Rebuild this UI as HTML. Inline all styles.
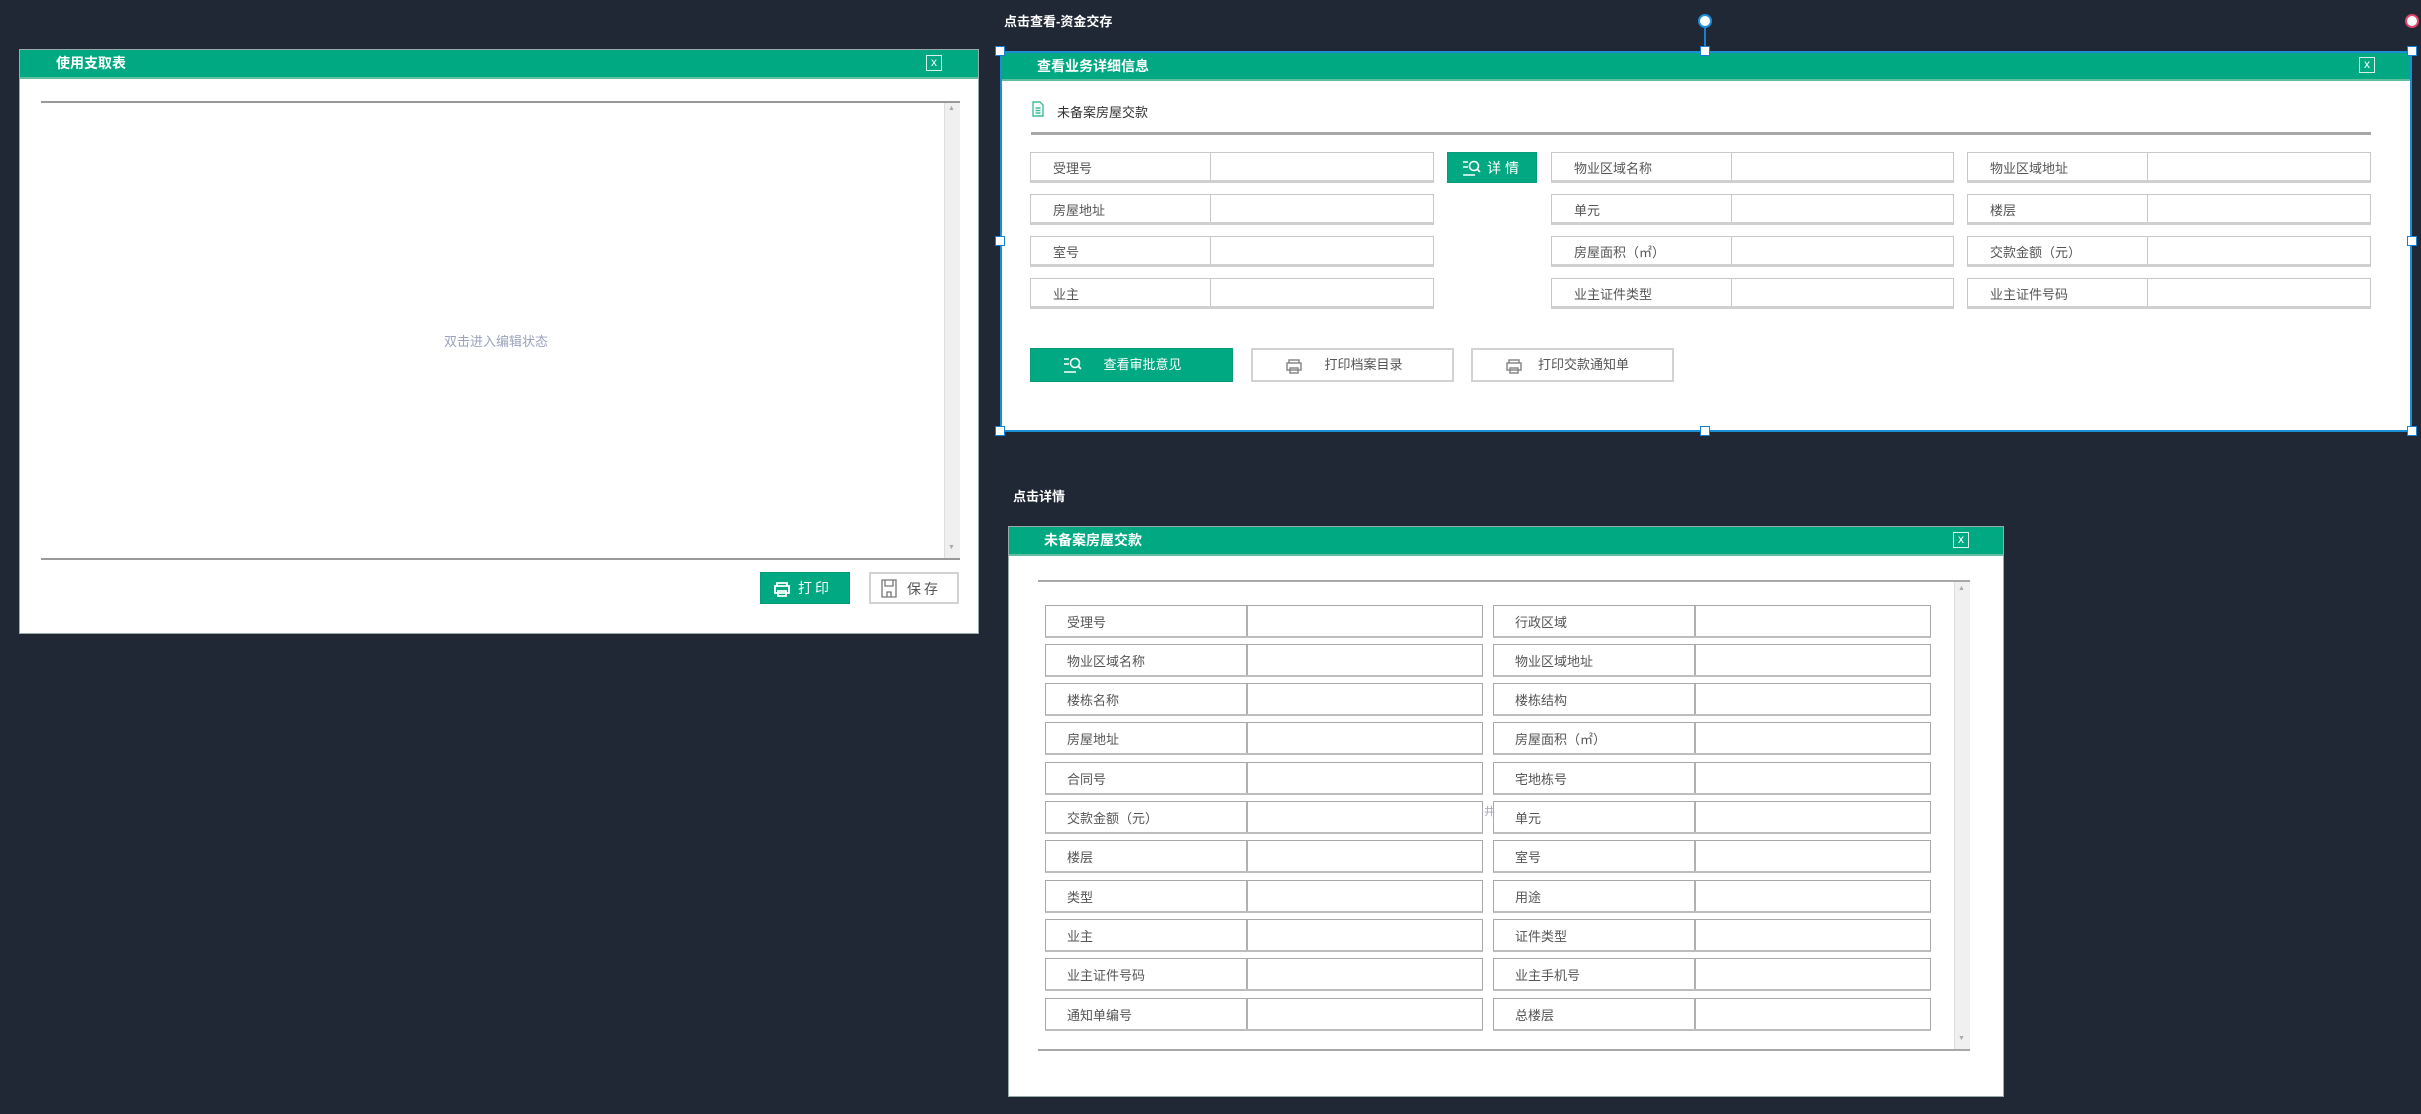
<!DOCTYPE html>
<html><head><meta charset="utf-8">
<style>
*{box-sizing:border-box;margin:0;padding:0}
body{width:2421px;height:1114px;background:#212835;position:relative;overflow:hidden;font-family:"Liberation Sans","Noto Sans CJK SC",sans-serif;}
.abs{position:absolute}
.panel{position:absolute;background:#fff;border:1px solid #9aa;}
.hdr{position:absolute;left:0;right:0;top:0;height:29px;background:#00a982;border-bottom:2px solid #5fbf9f;color:#fff;font-weight:bold;font-size:14px;line-height:26px;}
.close{position:absolute;width:16px;height:16px;border:1.5px solid #d7f0e8;color:#fff;font-size:12px;line-height:13px;text-align:center;font-weight:normal}
.lbl{position:absolute;color:#fff;font-weight:bold;font-size:13px}
.f{position:absolute;border:1px solid #c8c8c8;border-bottom:3px solid #cfcfcf;height:31px;background:#fff}
.f span{position:absolute;left:22px;top:2px;line-height:28px;font-size:13px;color:#555}
.f i{position:absolute;top:0;bottom:0;width:1px;background:#c8c8c8}
.g{position:absolute;border:1.5px solid #a9a9a9;border-bottom:2px solid #bdbdbd;height:33px;background:#fff;width:438px}
.g span{position:absolute;left:21px;top:1px;line-height:31px;font-size:13px;color:#555}
.g i{position:absolute;top:0;bottom:0;left:200px;width:2px;background:#b0b0b0}
.btn{position:absolute;font-size:13px;line-height:30px;text-align:center}
.gb{background:#00a982;color:#fff;border:1px solid #0a9b78}
.wb{background:#fff;color:#555;border:2px solid #d2d2d2}
.h{position:absolute;width:10px;height:10px;background:#fff;border:1.5px solid #1b7fd0}
</style></head><body>

<div class="panel" style="left:19px;top:49px;width:960px;height:585px;">
 <div class="hdr"><span style="position:absolute;left:36px;">使用支取表</span><div class="close" style="left:906px;top:5px;">x</div></div>
 <div class="abs" style="left:21px;top:51px;width:919px;height:2px;background:#999"></div>
 <div class="abs" style="left:924px;top:53px;width:16px;height:455px;background:#f0f0f0;border-left:1px solid #ddd"></div>
 <div class="abs" style="left:928px;top:55px;font-size:7px;color:#aaa">▲</div>
 <div class="abs" style="left:928px;top:494px;font-size:7px;color:#aaa">▼</div>
 <div class="abs" style="left:21px;top:508px;width:919px;height:2px;background:#999"></div>
 <div class="abs" style="left:424px;top:281px;font-size:13px;color:#9aa3bd">双击进入编辑状态</div>
 <div class="btn gb" style="left:740px;top:522px;width:90px;height:32px;font-size:14px;">
  <svg class="abs" style="left:12px;top:8px" width="18" height="16" viewBox="0 0 18 16" fill="none" stroke="#fff" stroke-width="1.8"><path d="M4 5V2h10v3M2 5h14v7H2zM5 10h8v5H5z"/></svg>
  <span style="margin-left:20px;letter-spacing:3px">打印</span></div>
 <div class="btn wb" style="left:849px;top:522px;width:90px;height:32px;font-size:14px;">
  <svg class="abs" style="left:10px;top:5px" width="16" height="19" viewBox="0 0 16 19" fill="none" stroke="#777" stroke-width="1.3"><path d="M1 1h14v17H1zM4 1v6h8V1M6 18v-5h4v5"/></svg>
  <span style="margin-left:20px;letter-spacing:3px">保存</span></div>
</div>

<div class="lbl" style="left:1004px;top:11px;">点击查看-资金交存</div>
<div class="abs" style="left:1704px;top:22px;width:2px;height:30px;background:#1b7fd0"></div>
<div class="abs" style="left:1698px;top:14px;width:14px;height:14px;border-radius:50%;background:#fff;border:2px solid #1b8fe0"></div>
<div class="abs" style="left:2405px;top:14px;width:14px;height:14px;border-radius:50%;background:#fff;border:2px solid #e0456a"></div>
<div class="panel" style="left:1000px;top:51px;width:1412px;height:381px;border:2px solid #1b8fd6;">
 <div class="hdr" style="top:0;height:28px"><span style="position:absolute;left:35px;">查看业务详细信息</span><div class="close" style="left:1357px;top:4px;">x</div></div>
 <svg class="abs" style="left:30px;top:48px" width="12" height="16" viewBox="0 0 12 16" fill="none" stroke="#3cbf99" stroke-width="1.4"><path d="M1 1h7l3 3v11H1zM3.5 7h5M3.5 9.5h5M3.5 12h5"/></svg>
 <div class="abs" style="left:55px;top:49px;font-size:13px;color:#333">未备案房屋交款</div>
 <div class="abs" style="left:29px;top:79px;width:1340px;height:3px;background:#a8a8a8"></div>
</div>
<div class="f" style="left:1030px;top:152px;width:404px"><span>受理号</span><i style="left:179px"></i></div>
<div class="f" style="left:1030px;top:194px;width:404px"><span>房屋地址</span><i style="left:179px"></i></div>
<div class="f" style="left:1030px;top:236px;width:404px"><span>室号</span><i style="left:179px"></i></div>
<div class="f" style="left:1030px;top:278px;width:404px"><span>业主</span><i style="left:179px"></i></div>
<div class="btn gb" style="left:1447px;top:152px;width:90px;height:31px;font-size:14px;">
 <svg class="abs" style="left:14px;top:6px" width="20" height="18" viewBox="0 0 20 18" fill="none" stroke="#fff" stroke-width="1.6"><path d="M1 3h5M1 8h5M1 16h12"/><circle cx="12" cy="7" r="4.5"/><path d="M15 10l3 3"/></svg>
 <span style="margin-left:26px;letter-spacing:4px">详情</span></div>
<div class="f" style="left:1551px;top:152px;width:403px"><span>物业区域名称</span><i style="left:179px"></i></div>
<div class="f" style="left:1551px;top:194px;width:403px"><span>单元</span><i style="left:179px"></i></div>
<div class="f" style="left:1551px;top:236px;width:403px"><span>房屋面积（㎡）</span><i style="left:179px"></i></div>
<div class="f" style="left:1551px;top:278px;width:403px"><span>业主证件类型</span><i style="left:179px"></i></div>
<div class="f" style="left:1967px;top:152px;width:404px"><span>物业区域地址</span><i style="left:179px"></i></div>
<div class="f" style="left:1967px;top:194px;width:404px"><span>楼层</span><i style="left:179px"></i></div>
<div class="f" style="left:1967px;top:236px;width:404px"><span>交款金额（元）</span><i style="left:179px"></i></div>
<div class="f" style="left:1967px;top:278px;width:404px"><span>业主证件号码</span><i style="left:179px"></i></div>
<div class="btn gb" style="left:1030px;top:348px;width:203px;height:34px;line-height:32px;">
 <svg class="abs" style="left:32px;top:7px" width="20" height="18" viewBox="0 0 20 18" fill="none" stroke="#fff" stroke-width="1.6"><path d="M1 3h5M1 8h5M1 16h12"/><circle cx="12" cy="7" r="4.5"/><path d="M15 10l3 3"/></svg>
 <span style="margin-left:22px">查看审批意见</span></div>
<div class="btn wb" style="left:1251px;top:348px;width:203px;height:34px;line-height:30px;">
 <svg class="abs" style="left:32px;top:8px" width="18" height="16" viewBox="0 0 18 16" fill="none" stroke="#888" stroke-width="1.5"><path d="M4 5V2h10v3M2 5h14v7H2zM5 10h8v5H5z"/></svg>
 <span style="margin-left:22px">打印档案目录</span></div>
<div class="btn wb" style="left:1471px;top:348px;width:203px;height:34px;line-height:30px;">
 <svg class="abs" style="left:32px;top:8px" width="18" height="16" viewBox="0 0 18 16" fill="none" stroke="#888" stroke-width="1.5"><path d="M4 5V2h10v3M2 5h14v7H2zM5 10h8v5H5z"/></svg>
 <span style="margin-left:22px">打印交款通知单</span></div>
<div class="h" style="left:995px;top:46px"></div>
<div class="h" style="left:1700px;top:46px"></div>
<div class="h" style="left:2407px;top:46px"></div>
<div class="h" style="left:995px;top:236px"></div>
<div class="h" style="left:2407px;top:236px"></div>
<div class="h" style="left:995px;top:426px"></div>
<div class="h" style="left:1700px;top:426px"></div>
<div class="h" style="left:2407px;top:426px"></div>

<div class="lbl" style="left:1013px;top:486px;">点击详情</div>
<div class="panel" style="left:1008px;top:526px;width:996px;height:571px;">
 <div class="hdr"><span style="position:absolute;left:35px;">未备案房屋交款</span><div class="close" style="left:944px;top:5px;">x</div></div>
 <div class="abs" style="left:29px;top:53px;width:932px;height:2px;background:#a8a8a8"></div>
 <div class="abs" style="left:945px;top:55px;width:16px;height:467px;background:#f0f0f0;border-left:1px solid #ddd"></div>
 <div class="abs" style="left:949px;top:58px;font-size:7px;color:#aaa">▲</div>
 <div class="abs" style="left:949px;top:508px;font-size:7px;color:#aaa">▼</div>
 <div class="abs" style="left:29px;top:522px;width:932px;height:2px;background:#a8a8a8"></div>
</div>
<div class="g" style="left:1045px;top:605px"><span>受理号</span><i></i></div>
<div class="g" style="left:1045px;top:644px"><span>物业区域名称</span><i></i></div>
<div class="g" style="left:1045px;top:683px"><span>楼栋名称</span><i></i></div>
<div class="g" style="left:1045px;top:722px"><span>房屋地址</span><i></i></div>
<div class="g" style="left:1045px;top:762px"><span>合同号</span><i></i></div>
<div class="g" style="left:1045px;top:801px"><span>交款金额（元）</span><i></i></div>
<div class="g" style="left:1045px;top:840px"><span>楼层</span><i></i></div>
<div class="g" style="left:1045px;top:880px"><span>类型</span><i></i></div>
<div class="g" style="left:1045px;top:919px"><span>业主</span><i></i></div>
<div class="g" style="left:1045px;top:958px"><span>业主证件号码</span><i></i></div>
<div class="g" style="left:1045px;top:998px"><span>通知单编号</span><i></i></div>
<div class="g" style="left:1493px;top:605px"><span>行政区域</span><i></i></div>
<div class="g" style="left:1493px;top:644px"><span>物业区域地址</span><i></i></div>
<div class="g" style="left:1493px;top:683px"><span>楼栋结构</span><i></i></div>
<div class="g" style="left:1493px;top:722px"><span>房屋面积（㎡）</span><i></i></div>
<div class="g" style="left:1493px;top:762px"><span>宅地栋号</span><i></i></div>
<div class="g" style="left:1493px;top:801px"><span>单元</span><i></i></div>
<div class="g" style="left:1493px;top:840px"><span>室号</span><i></i></div>
<div class="g" style="left:1493px;top:880px"><span>用途</span><i></i></div>
<div class="g" style="left:1493px;top:919px"><span>证件类型</span><i></i></div>
<div class="g" style="left:1493px;top:958px"><span>业主手机号</span><i></i></div>
<div class="g" style="left:1493px;top:998px"><span>总楼层</span><i></i></div>
<div class="abs" style="left:1484px;top:803px;font-size:11px;color:#aab">井</div>
</body></html>
